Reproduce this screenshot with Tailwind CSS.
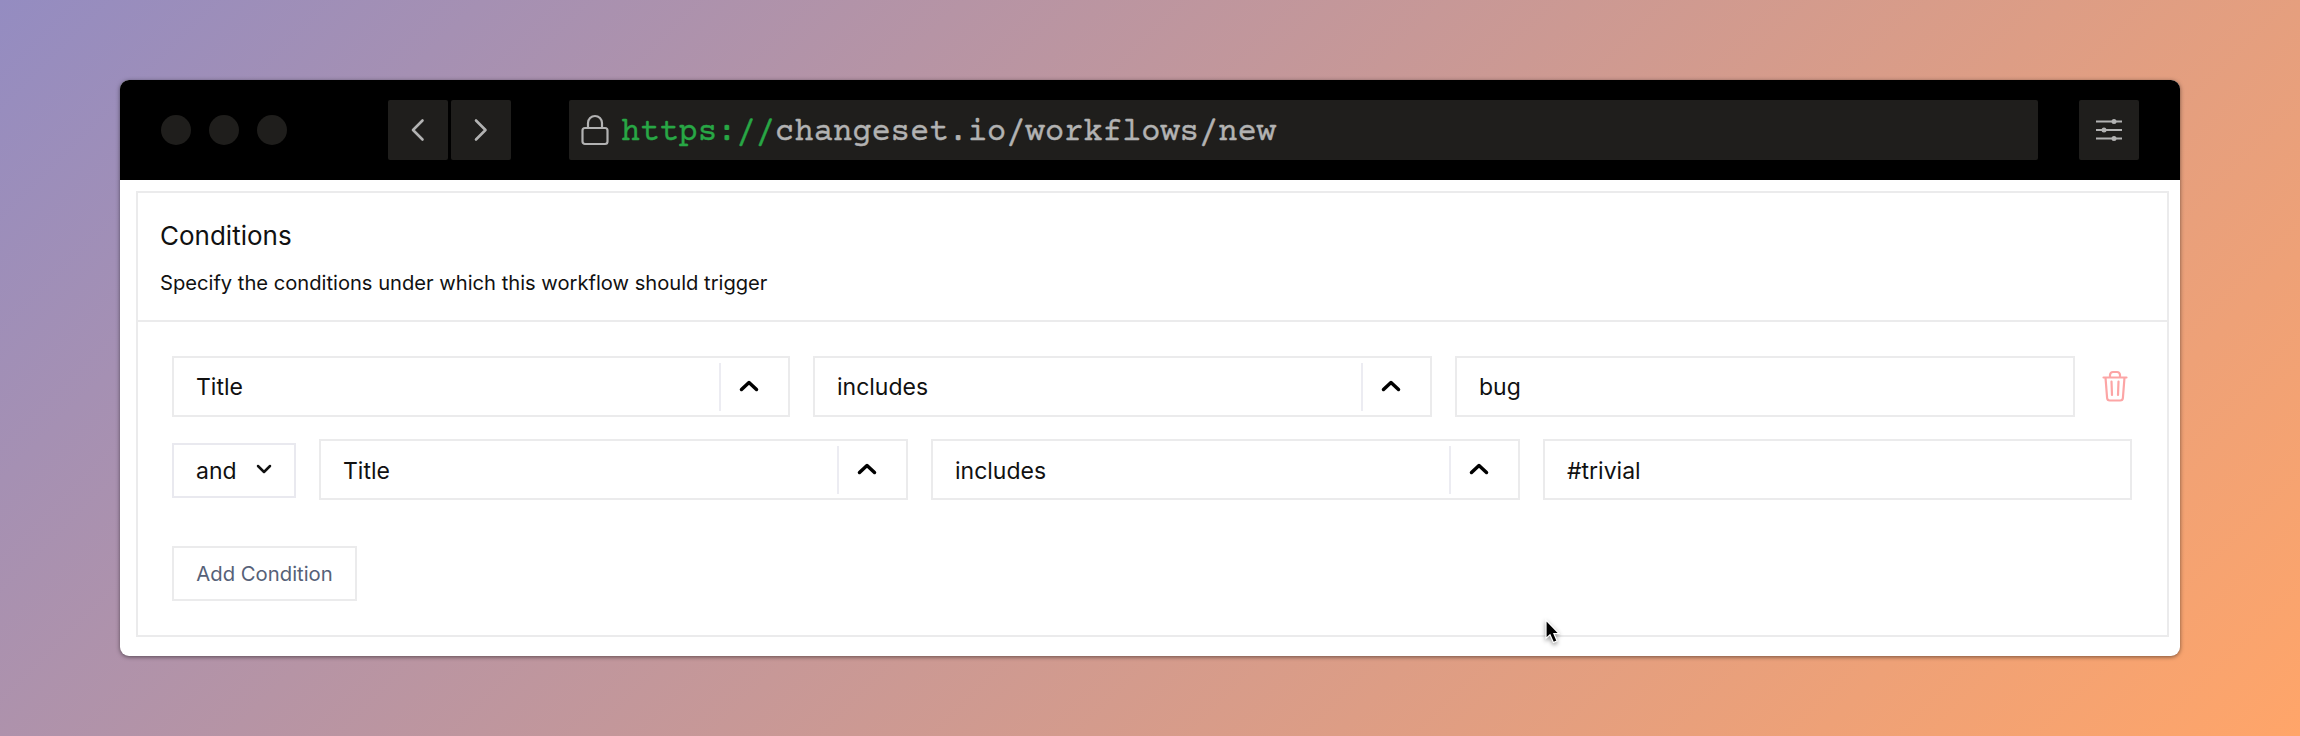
<!DOCTYPE html>
<html lang="en">
<head>
<meta charset="utf-8">
<title>Workflow conditions</title>
<script src="https://cdn.jsdelivr.net/npm/@tailwindcss/browser@4"></script>
</head>
<body class="h-[736px] w-[2300px] overflow-hidden bg-[linear-gradient(135deg,#948cc1_0%,#ffa569_100%)] px-[120px] py-20 font-['Inter',sans-serif] text-[#111]">
<main class="relative h-[576px] overflow-hidden rounded-[9px] bg-white shadow-[0_1px_4px_rgba(0,0,0,0.5)]">
  <header class="flex h-[100px] items-center bg-black pl-[41px]">
    <div class="flex gap-[18px]">
      <span class="size-[30px] rounded-full bg-[#1f1e1c]"></span>
      <span class="size-[30px] rounded-full bg-[#1f1e1c]"></span>
      <span class="size-[30px] rounded-full bg-[#1f1e1c]"></span>
    </div>
    <nav class="ml-[101px] flex gap-[3px]">
      <button class="flex size-[60px] items-center justify-center rounded-[2px] bg-[#1f1e1c]"><svg width="60" height="60" fill="none" stroke="#b2b2b2" stroke-width="2.6" stroke-linecap="round" stroke-linejoin="round"><path d="M34.500 20.500 25 30l9.500 9.500"/></svg></button>
      <button class="flex size-[60px] items-center justify-center rounded-[2px] bg-[#1f1e1c]"><svg width="60" height="60" fill="none" stroke="#b2b2b2" stroke-width="2.600" stroke-linecap="round" stroke-linejoin="round"><path d="M25 20.500 34.500 30l-9.500 9.500"/></svg></button>
    </nav>
    <div class="ml-[58px] flex h-[60px] w-[1469px] items-center rounded-[2px] bg-[#1f1e1c] pl-[12px]">
      <svg width="30" height="32" fill="none" stroke="#b2b2b2" stroke-width="2.200"><rect x="1.500" y="14" width="25" height="16" rx="2.500"/><path d="M7 14V9a7 7 0 0 1 14 0v5"/></svg>
      <p class="ml-[10px] pt-[7px] font-['Courier_Prime','Courier_10_Pitch','Nimbus_Mono_PS','Liberation_Mono',monospace] text-[32px] leading-[53px] tracking-[0.08px] text-[#b2b2b2] [-webkit-text-stroke:0.4px_currentColor]"><span class="text-[#28a745]">https://</span>changeset.io/workflows/new</p>
    </div>
    <button class="ml-[41px] size-[60px] rounded-[2px] bg-[#1f1e1c]"><svg width="60" height="60" stroke="#b2b2b2" fill="#b2b2b2" stroke-width="2"><path d="M17 21.500h26M17 30h26M17 38.500h26"/><g stroke="none"><circle cx="35" cy="21.500" r="2.500"/><circle cx="25" cy="30" r="2.500"/><circle cx="35" cy="38.500" r="2.500"/></g></svg></button>
  </header>
  <section class="ml-[16px] mt-[11px] h-[446px] w-[2033px] border-2 border-[#ebebec]">
    <div class="h-[129px] border-b-2 border-[#ebebec] pl-[22px] pt-[24px]">
      <h1 class="text-[26px] leading-[38px]">Conditions</h1>
      <p class="mt-[13px] text-[20.15px] leading-[30px]">Specify the conditions under which this workflow should trigger</p>
    </div>
    <div class="pl-[34px] pt-[34px] text-[23px]">
      <div class="flex h-[61px] items-center">
        <div class="flex h-[61px] w-[618px] items-center justify-between border-2 border-[#ebebec] pl-[22px]"><span class="pt-[2px]">Title</span><span class="flex h-[48px] w-[69px] items-center border-l-2 border-[#ececf2] pl-[18px]"><svg class="mb-[2px]" width="20" height="14" fill="none" stroke="#000" stroke-width="3.500" stroke-linecap="round" stroke-linejoin="round"><path d="m2.500 10.500 7.500-7 7.500 7"/></svg></span></div>
        <div class="ml-[23px] flex h-[61px] w-[619px] items-center justify-between border-2 border-[#ebebec] pl-[22px]"><span class="pt-[2px]">includes</span><span class="flex h-[48px] w-[69px] items-center border-l-2 border-[#ececf2] pl-[18px]"><svg class="mb-[2px]" width="20" height="14" fill="none" stroke="#000" stroke-width="3.500" stroke-linecap="round" stroke-linejoin="round"><path d="m2.500 10.500 7.500-7 7.500 7"/></svg></span></div>
        <div class="ml-[23px] flex h-[61px] w-[620px] items-center border-2 border-[#ebebec] pl-[22px]"><span class="pt-[2px]">bug</span></div>
        <svg class="mb-[1px] ml-[27px]" width="26" height="32" fill="none" stroke="#fca5a5" stroke-width="2.200" stroke-linecap="round" stroke-linejoin="round"><path d="M1.500 7.500h23M3.500 7.500l1.600 20.500q.2 2.500 2.700 2.500h10.400q2.500 0 2.700-2.500L22.500 7.500M8 7V4.800Q8.300 2 11 2h4Q17.700 2 18 4.800V7M9.500 11.500l.5 13.500M16.500 11.500l-.5 13.500"/></svg>
      </div>
      <div class="mt-[22px] flex h-[61px] items-center">
        <div class="mt-[1px] flex h-[55px] w-[124px] items-center border-2 border-[#e9e9ef] pl-[22px]"><span class="pt-[2px]">and</span><svg class="mb-[2px] ml-[18px]" width="18" height="12" fill="none" stroke="#111" stroke-width="2.500" stroke-linecap="round" stroke-linejoin="round"><path d="m3 3 6 6 6-6"/></svg></div>
        <div class="ml-[23px] flex h-[61px] w-[589px] items-center justify-between border-2 border-[#ebebec] pl-[22px]"><span class="pt-[3px]">Title</span><span class="flex h-[48px] w-[69px] items-center border-l-2 border-[#ececf2] pl-[18px]"><svg class="mb-[2px]" width="20" height="14" fill="none" stroke="#000" stroke-width="3.500" stroke-linecap="round" stroke-linejoin="round"><path d="m2.500 10.500 7.500-7 7.500 7"/></svg></span></div>
        <div class="ml-[23px] flex h-[61px] w-[589px] items-center justify-between border-2 border-[#ebebec] pl-[22px]"><span class="pt-[3px]">includes</span><span class="flex h-[48px] w-[69px] items-center border-l-2 border-[#ececf2] pl-[18px]"><svg class="mb-[2px]" width="20" height="14" fill="none" stroke="#000" stroke-width="3.500" stroke-linecap="round" stroke-linejoin="round"><path d="m2.500 10.500 7.500-7 7.500 7"/></svg></span></div>
        <div class="ml-[23px] flex h-[61px] w-[589px] items-center border-2 border-[#ebebec] pl-[22px]"><span class="pt-[3px]">#trivial</span></div>
      </div>
      <button class="mt-[46px] block h-[55px] w-[185px] border-2 border-[#ebebec] pt-[2px] text-[20.300px] text-[#566178]">Add Condition</button>
    </div>
  </section>
  <svg class="absolute left-[1424px] top-[538px] drop-shadow-[0_2px_2px_rgba(0,0,0,0.4)]" width="18" height="28"><path d="M2 2v18.500l4-3.700 3.400 7.700 3.700-1.600-3.200-7.400H15z" fill="#000" stroke="#fff" stroke-width="1.200"/></svg>
</main>
</body>
</html>
